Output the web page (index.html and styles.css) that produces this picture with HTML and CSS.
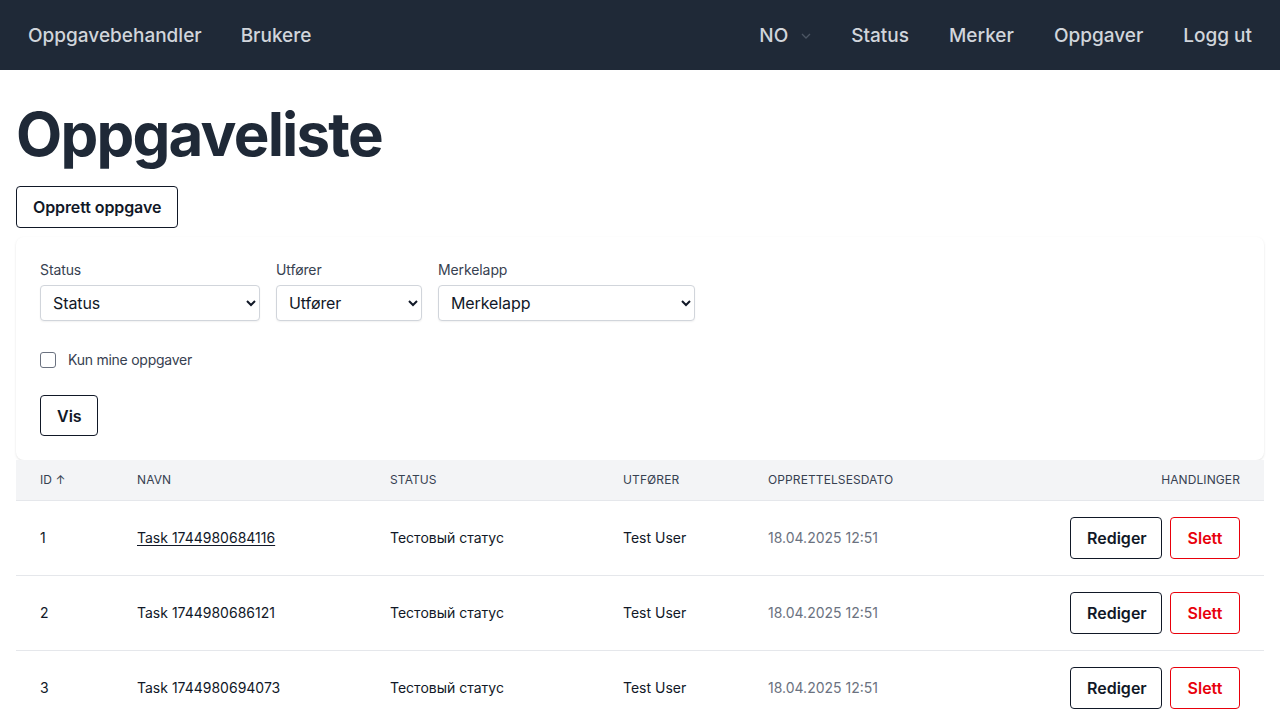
FILE: index.html
```html
<!DOCTYPE html>
<html lang="no">
<head>
<meta charset="utf-8">
<title>Oppgaveliste</title>
<link rel="stylesheet" href="styles.css">
</head>
<body>
<nav class="topnav">
  <div class="nav-left">
    <a class="nav-link" href="#">Oppgavebehandler</a>
    <a class="nav-link" href="#">Brukere</a>
  </div>
  <div class="nav-right">
    <span class="nav-link lang">NO
      <svg class="chev" width="10" height="6" viewBox="0 0 10 6"><path d="M1 1l4 4 4-4" fill="none" stroke="#4b5563" stroke-width="1.3"/></svg>
    </span>
    <a class="nav-link" href="#">Status</a>
    <a class="nav-link" href="#">Merker</a>
    <a class="nav-link" href="#">Oppgaver</a>
    <a class="nav-link" href="#">Logg ut</a>
  </div>
</nav>
<main class="page">
  <h1 class="title">Oppgaveliste</h1>
  <button class="btn btn-dark create">Opprett oppgave</button>
  <section class="filters">
    <div class="filter-row">
      <label class="field w-status">
        <span class="field-label">Status</span>
        <select class="select"><option>Status</option></select>
      </label>
      <label class="field w-utf">
        <span class="field-label">Utfører</span>
        <select class="select"><option>Utfører</option></select>
      </label>
      <label class="field w-merk">
        <span class="field-label">Merkelapp</span>
        <select class="select"><option>Merkelapp</option></select>
      </label>
    </div>
    <label class="check">
      <span class="box"></span>
      <span>Kun mine oppgaver</span>
    </label>
    <button class="btn btn-dark vis">Vis</button>
  </section>
  <table class="tasks">
    <thead>
      <tr>
        <th class="c-id">ID ↑</th>
        <th class="c-name">Navn</th>
        <th class="c-status">Status</th>
        <th class="c-user">Utfører</th>
        <th class="c-date">Opprettelsesdato</th>
        <th class="c-act">Handlinger</th>
      </tr>
    </thead>
    <tbody>
      <tr>
        <td>1</td>
        <td><a class="task-link" href="#">Task 1744980684116</a></td>
        <td>Тестовый статус</td>
        <td>Test User</td>
        <td class="date">18.04.2025 12:51</td>
        <td class="c-act"><div class="actions"><button class="btn btn-dark">Rediger</button><button class="btn btn-red">Slett</button></div></td>
      </tr>
      <tr>
        <td>2</td>
        <td>Task 1744980686121</td>
        <td>Тестовый статус</td>
        <td>Test User</td>
        <td class="date">18.04.2025 12:51</td>
        <td class="c-act"><div class="actions"><button class="btn btn-dark">Rediger</button><button class="btn btn-red">Slett</button></div></td>
      </tr>
      <tr>
        <td>3</td>
        <td>Task 1744980694073</td>
        <td>Тестовый статус</td>
        <td>Test User</td>
        <td class="date">18.04.2025 12:51</td>
        <td class="c-act"><div class="actions"><button class="btn btn-dark">Rediger</button><button class="btn btn-red">Slett</button></div></td>
      </tr>
    </tbody>
  </table>
</main>
</body>
</html>
```

FILE: styles.css
```css
* { box-sizing: border-box; }
html, body { margin: 0; padding: 0; }
body {
  font-family: Inter, "Noto Sans", "DejaVu Sans", sans-serif;
  color: #111827;
  background: #ffffff;
}
.topnav {
  height: 70px;
  background: #1f2937;
  display: flex;
  align-items: center;
  justify-content: space-between;
  padding: 0 28px;
}
.nav-left, .nav-right {
  display: flex;
  align-items: center;
  gap: 40px;
}
.nav-left { gap: 39px; }
.nav-right { gap: 40px; }
.nav-link {
  color: #d1d5db;
  text-decoration: none;
  font-size: 19px;
  font-weight: 500;
  letter-spacing: 0;
}
.lang { display: inline-flex; align-items: center; gap: 13px; }
.chev { margin-top: 1px; }
.page { padding: 0 16px; }
.title {
  margin: 34px 0 0;
  font-size: 60px;
  line-height: 60px;
  font-weight: 700;
  color: #1f2937;
  letter-spacing: -1.8px;
}
.btn {
  font-family: inherit;
  font-size: 16px;
  font-weight: 600;
  background: #fff;
  border-radius: 4px;
  cursor: pointer;
  padding: 0 16px;
  height: 41px;
}
.btn-dark { border: 1px solid #111827; color: #111827; }
.btn-red { border: 1px solid #e8000b; color: #e8000b; }
.create { margin-top: 22px; height: 42px; letter-spacing: -0.1px; }
.filters {
  margin-top: 9px;
  background: #fff;
  border-radius: 8px;
  box-shadow: 0 1px 3px rgba(0,0,0,0.08), 0 1px 2px rgba(0,0,0,0.04);
  padding: 23px 24px 24px;
}
.filter-row { display: flex; gap: 16px; }
.field { display: flex; flex-direction: column; gap: 5px; }
.field-label { font-size: 14px; line-height: 20px; color: #374151; letter-spacing: -0.1px; }
.w-status { width: 220px; }
.w-utf { width: 146px; }
.w-merk { width: 257px; }
.select {
  height: 36px;
  width: 100%;
  font-family: inherit;
  font-size: 16px;
  color: #111827;
  background: #fff;
  border: 1px solid #d1d5db;
  border-radius: 4px;
  box-shadow: 0 1px 2px rgba(0,0,0,0.06);
  padding: 0 8px 0 8px;
  letter-spacing: -0.1px;
}
.check {
  display: flex;
  align-items: center;
  gap: 12px;
  margin-top: 30px;
  font-size: 14px;
  color: #374151;
  letter-spacing: -0.25px;
}
.box {
  width: 16px; height: 16px;
  border: 1px solid #6b7280;
  border-radius: 3px;
  background: #fff;
}
.vis { display: block; margin-top: 27px; padding: 0 16px; width: 58px; }
.tasks {
  width: 100%;
  border-collapse: collapse;
  font-size: 14px;
}
.tasks thead tr { background: #f3f4f6; }
.tasks th {
  height: 40px;
  text-align: left;
  font-size: 12px;
  font-weight: 400;
  text-transform: uppercase;
  letter-spacing: 0.1px;
  color: #374151;
  padding: 0 24px;
  border-bottom: 1px solid #e5e7eb;
}
.tasks td {
  height: 75px;
  padding: 0 24px;
  color: #111827;
  border-bottom: 1px solid #e5e7eb;
}
.tasks th.c-act, .tasks td.c-act { text-align: right; }
.c-id { width: 97px; }
.c-name { width: 253px; }
.c-status { width: 233px; }
.c-user { width: 145px; }
.tasks td.date { color: #6b7280; }
.task-link { color: #111827; text-decoration: underline; text-underline-offset: 2px; }
.actions { display: flex; justify-content: flex-end; gap: 8px; }
.actions .btn { height: 42px; }
.actions .btn-dark { width: 92px; }
.actions .btn-red { width: 70px; }
```
